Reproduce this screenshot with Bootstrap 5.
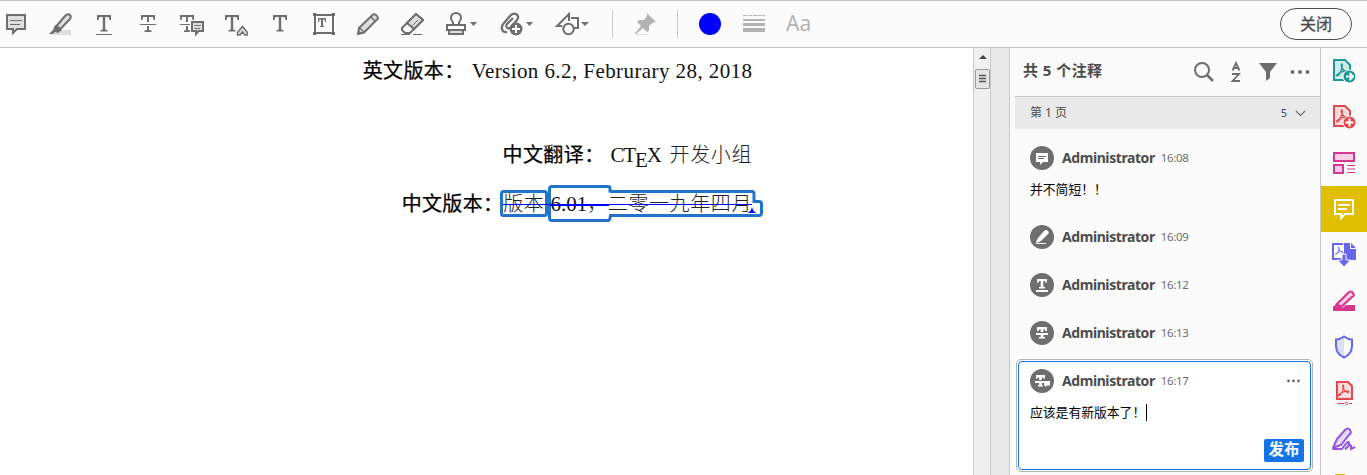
<!DOCTYPE html>
<html lang="zh-CN">
<head>
<meta charset="utf-8">
<title>注释</title>
<link href="https://cdn.jsdelivr.net/npm/bootstrap@5.3.0/dist/css/bootstrap.min.css" rel="stylesheet">
<style>
body{height:475px;font-family:"Noto Sans","Noto Sans CJK SC",sans-serif;color:#4b4b4b;background:#fbfbfb}
svg{display:block;flex:none}
main{height:427px}
.toolbar{height:48px;border-top:1px solid #c8c8c8;border-bottom:1px solid #c8c8c8;padding-left:4px;padding-right:15px}
.tools{gap:20px}
.g{fill:none;stroke:#6e6e6e;stroke-width:2}
.tint{fill:#dedede}
.solid{fill:#6e6e6e;stroke:none}
.rule{width:1px;height:28px;background:#c8c8c8}
.color-dot{width:22px;height:22px;background:#00f}
.aa{font:21px/22px "Noto Sans",sans-serif;color:#b3b3b3;position:relative;top:-1px}
.close-btn{width:72px;height:32px;border:1px solid #4b4b4b;font-size:16px;line-height:28px;color:#4b4b4b;padding:0;-webkit-text-stroke:.3px #4b4b4b}
.page{width:973px;background:#fff;padding:7px 221px 0 0;color:#000}
.line{height:30px;line-height:30px;font-size:20px;white-space:nowrap}
.hei{font-family:"Noto Sans CJK SC",sans-serif;font-weight:400;letter-spacing:.4px;-webkit-text-stroke:.25px #000}
.song{font-family:"Noto Sans CJK SC",sans-serif;font-weight:300;letter-spacing:.6px;color:#222}
.roman{font-family:"Liberation Serif",serif;font-size:21px;color:#111}
.version{letter-spacing:.42px;margin-right:-.42px}
.tex-e{position:relative;top:5px}
.marks{position:absolute;left:495px;top:132px}
.scroll{width:18px;background:#f0f0f0;border-left:1px solid #c8c8c8;border-right:1px solid #c8c8c8}
.gutter{width:19px;background:#e9e9e9;border-right:1px solid #c8c8c8}
.comments{width:310px}
.c-head{height:48px;padding:0 10px 0 13px}
.c-title{font-size:15px;font-weight:700;line-height:40px;padding-bottom:4px;letter-spacing:.45px}
.c-group{height:33px;margin-left:5px;border-top:1px solid #c8c8c8;background:#e9e9e9;font-size:12px;padding:0 14px 0 15px}
.entry{height:48px;padding-left:20px}
.who{font-size:14px;font-weight:700;line-height:24px;margin-left:8px;letter-spacing:-.42px}
.when{font-size:11.5px;line-height:24px;margin-left:6px;color:#6e6e6e;letter-spacing:-.35px}
.body-text{font-size:12.8px;line-height:18px;color:#000;font-family:"Noto Sans CJK SC",sans-serif}
.editor{margin:0 7px 0 6px;height:113px;border:1px solid #b3b3b3;border-radius:5px;padding:1px;background:#fff}
.editor-in{height:109px;border:1px solid #1473e6;border-radius:4px;padding:7px 6px 0 11px}
.caret{width:1px;height:17px;background:#000;margin-left:1px}
.post{width:40px;height:23px;border-radius:2px;background:#1473e6;color:#fff;font-size:15.5px;font-weight:700;line-height:21px}
.rail{width:47px;border-left:1px solid #c8c8c8}
.rail>div{height:46px;flex:none}
.rail .on{background:#e0be00}
</style>
</head>
<body class="d-flex flex-column overflow-hidden">
<svg width="0" height="0" class="position-absolute">
<defs>
<g id="tee"><path d="M0 0H14V5H12.4L11.6 2H8.2V14.5L10.5 15.2V16.5H3.5V15.2L5.8 14.5V2H2.4L1.6 5H0Z"/></g>
<g id="acro" fill="none" stroke-width="1.3"><path d="M6 0C4.5 0 5.5 4 8 6.500S13 8.500 12 7.300S6 7 2.500 9.500S.8 12 2 11.500S7.500 3 6 0Z"/></g>
</defs>
</svg>
<header class="toolbar d-flex align-items-center flex-shrink-0">
<div class="tools d-flex align-items-center">
<svg class="g" width="24" height="24"><path class="tint" d="M3 3H21V17H13L9 21V17H3Z"/><path d="M6 8.500H18M6 12.500H16" stroke-width="1"/></svg>
<svg width="24" height="24"><path d="M10 18H23V23H4Z" fill="#dedede"/><path d="M8.500 14L17 4Q20 1 22 3T21 8L12.500 17Z" fill="#dedede" stroke="#6e6e6e" stroke-width="2"/><path d="M7 13L14 18L10 21L7 20L5 22H1L5 18Z" fill="#6e6e6e"/></svg>
<svg class="solid" width="24" height="24"><use href="#tee" x="5" y="3"/><path d="M4 22H20V23H4Z"/></svg>
<svg class="solid" width="24" height="24"><path d="M5 3H19V8H17.500L17 5H13V10H11V5H7L6.500 8H5ZM11 14H13V18L15.500 18.500V20H8.500V18.500L11 18ZM4 12H20V13H4Z"/></svg>
<svg width="24" height="24"><path class="solid" d="M0 3H14V8H12.500L12 5H8V10H6V5H2L1.500 8H0ZM6 14H8V18L10 18.500V20H4V18.500L6 18ZM0 12H10V13H0Z"/><path class="g" style="fill:#dedede" d="M12 10H23V19H18.500L16 22V19H12Z"/><path d="M14.500 13.500H21M14.500 16.500H20" stroke="#6e6e6e"/></svg>
<svg class="solid" width="24" height="24"><use href="#tee" x="1" y="3"/><path d="M13.500 20.500L18.500 14.500L23.500 20.500V23H21L18.500 20L16 23H13.500Z" fill="#dedede" stroke="#6e6e6e" stroke-width="1.500"/></svg>
<svg class="solid" width="24" height="24"><use href="#tee" x="5" y="3"/></svg>
<svg class="g" width="24" height="24"><path d="M3 3H21V21H3Z"/><path class="solid" d="M1 1h3v3H1zM20 1h3v3h-3zM1 20h3v3H1zM20 20h3v3h-3zM6 6H14V10H12.800V7.500H11V14H12V15H8V14H9V7.500H7.200V10H6Z"/></svg>
<svg class="g" width="24" height="24"><path class="tint" d="M3 16L17 2.500Q19 1.500 21 4T21 7.500L8 20.500L2 22Z"/><path d="M3.500 16L8 20M15 5L19 9" stroke-width="1.500"/><path class="solid" d="M1 23L2.500 18.500L5.500 21.500Z"/></svg>
<svg class="g" width="24" height="24"><path fill="#fff" d="M2 16L16 2L23 8L10 21H5L2 18Z"/><path d="M16 2L23 8L14 17L7 11Z" class="tint"/><path d="M12 14L18 8" stroke-width="1"/><path d="M1 22.500H10M13 22.500H23" stroke-width="1" stroke-dasharray="9 2 2 1"/></svg>
</div>
<svg width="36" height="24" class="g" style="margin-left:19px"><path d="M4 13H22V18H4Z"/><path class="tint" d="M6 18H20V22H6Z"/><path d="M10 13V10.500Q8 8 8 5.500A5 4.500 0 0 1 18 5.500Q18 8 16 10.500V13"/><path class="solid" d="M27 10H34L30.500 14Z"/></svg>
<svg width="36" height="24" class="g" style="margin-left:20px"><path d="M8 20C3 21 1 15 5 11L11 4C15-1 22 3 18 8L12 15C9 18 6 15 8 12L14 6" stroke-width="2.200"/><circle cx="17" cy="17" r="6.500" class="solid"/><path d="M17 13V21M13 17H21" style="stroke:#fff"/><path class="solid" d="M27 10H34L30.500 14Z"/></svg>
<svg width="36" height="24" class="g" style="margin-left:19px"><path d="M8 14H3L15 2V9M17 6H24V16H20"/><circle cx="14.500" cy="17" r="5.200" fill="#fbfbfb"/><path class="solid" d="M27 10H35L31 14Z"/></svg>
<div class="rule" style="margin-left:22px"></div>
<svg width="24" height="24" style="margin-left:20px"><path d="M3 22H15V23H3Z" fill="#dedede"/><path fill="#b3b3b3" d="M14 1L23 10L20 10.500L16 14V19L14 20L10 16L3 22L2 21L8 14L4 10L6 8H11L14 4Z"/></svg>
<div class="rule" style="margin-left:20px"></div>
<div class="color-dot rounded-circle" style="margin-left:21px"></div>
<svg width="22" height="22" style="margin-left:22px"><path d="M0 2.500H22" stroke="#b3b3b3" stroke-dasharray="4 1"/><path fill="#b3b3b3" d="M0 6H22V8H0ZM0 10H22V13H0ZM0 15H22V19H0Z"/></svg>
<span class="aa" style="margin-left:21px">Aa</span>
<button class="btn close-btn rounded-pill ms-auto">关闭</button>
</header>
<main class="d-flex flex-shrink-0 overflow-hidden">
<section class="page position-relative text-end flex-shrink-0">
<div class="line"><span class="hei">英文版本：</span><span class="roman version" style="margin-left:7px">Version 6.2, Februrary 28, 2018</span></div>
<div class="line" style="margin-top:54px"><span class="hei">中文翻译：</span><span class="roman" style="margin-left:6px;letter-spacing:-1.200px">CT<span class="tex-e">E</span>X</span><span class="song" style="margin-left:9px">开发小组</span></div>
<div class="line" style="margin-top:19px"><span class="hei" style="letter-spacing:.3px">中文版本：</span><span class="song">版本</span><span class="roman" style="margin-left:6px">6.01</span><span class="song">，二零一九年四月</span></div>
<svg class="marks" width="275" height="46" fill="none"><g stroke="#2174c9" stroke-width="3"><rect x="6.500" y="11.500" width="45" height="24" rx="2"/><path d="M115 12.500V8Q115 6.500 113 6.500H57Q54.500 6.500 54.500 9V38Q54.500 40.500 57 40.500H113Q115 40.500 115.500 35.500H264Q266.500 35.500 266.500 33V24Q266.500 21.500 264 21.500H259V14Q259 11.500 257 11.500H115"/></g><path d="M8 24.500H257" stroke="#00f"/><path d="M55 25H114" stroke="#00f" stroke-width="2"/><path d="M252 33Q256 32 257 27Q258 32 262 33Z" fill="#00f"/></svg>
</section>
<div class="scroll flex-shrink-0"><svg width="16" height="50"><path d="M5 11L9 7L13 11Z" fill="#444"/><rect x="1.500" y="21.500" width="14" height="19" rx="1" fill="#e4e4e4" stroke="#999"/><path d="M5 27.500H12M5 30.500H12M5 33.500H12" stroke="#555" stroke-width="1.500"/></svg></div>
<div class="gutter flex-shrink-0"></div>
<section class="comments flex-shrink-0">
<div class="c-head d-flex align-items-center"><div class="c-title">共 5 个注释</div>
<svg class="g ms-auto" width="22" height="22"><circle cx="10" cy="9" r="7"/><path d="M15 14L21 20" stroke-width="2.500"/></svg>
<svg class="g" width="12" height="22" style="margin-left:16px"><path d="M2.500 9.500L6 2L9.500 9.500M3.500 7H8.500M2 13H9L2.500 20H10" stroke-width="1.800"/></svg>
<svg class="solid" width="20" height="20" style="margin-left:16px"><path d="M1 1H19L12 10V16L8 19V10Z"/></svg>
<svg class="solid" width="20" height="20" style="margin-left:12px"><circle cx="2.500" cy="10" r="2"/><circle cx="10" cy="10" r="2"/><circle cx="17.500" cy="10" r="2"/></svg></div>
<div class="c-group d-flex align-items-center"><span>第 1 页</span><span class="ms-auto" style="font-size:11px">5</span><svg width="11" height="8" style="margin-left:8px" fill="none" stroke="#6e6e6e" stroke-width="1.200"><path d="M1 2L5.500 6.500L10 2"/></svg></div>
<div style="padding-top:17px">
<div class="entry" style="height:79px"><div class="d-flex"><svg width="24" height="24"><circle class="solid" cx="12" cy="12" r="12"/><path fill="#fff" d="M6 7H18V16H13L10 19V16H6Z"/><path d="M8 10.500H16M8 12.500H14" stroke="#6e6e6e"/></svg><span class="who">Administrator</span><span class="when">16:08</span></div><div class="body-text" style="margin-top:10px">并不简短！！</div></div>
<div class="entry d-flex"><svg width="24" height="24"><circle class="solid" cx="12" cy="12" r="12"/><path fill="#fff" d="M8 13L14 6Q16 4 18 6T17 10L11 16L7 18L6 17ZM5 19L7 18H16V19Z"/></svg><span class="who">Administrator</span><span class="when">16:09</span></div>
<div class="entry d-flex"><svg width="24" height="24"><circle class="solid" cx="12" cy="12" r="12"/><path fill="#fff" d="M7 6H17V9.500H15.500L15 8H13.300V14H15V15.500H9V14H10.700V8H9L8.500 9.500H7ZM6 17H18V19H6Z"/></svg><span class="who">Administrator</span><span class="when">16:12</span></div>
<div class="entry d-flex" style="height:38px"><svg width="24" height="24"><circle class="solid" cx="12" cy="12" r="12"/><path fill="#fff" d="M7 6H17V10H15.500L15 8.500H13.300V11H10.700V8.500H9L8.500 10H7ZM6 12H18V14H13.300V16H15V17.500H9V16H10.700V14H6Z"/></svg><span class="who">Administrator</span><span class="when">16:13</span></div>
</div>
<div class="editor"><div class="editor-in"><div class="d-flex align-items-center"><svg width="24" height="24"><circle class="solid" cx="12" cy="12" r="12"/><path fill="#fff" d="M6 6H15V9.500H13.500L13 8.500H11.800V11H9.200V8.500H8L7.500 9.500H6ZM5 12H14V14H11.800V16H13V17.500H8V16H9.200V14H5ZM14 12H20V16.500H17L15.500 18.500V16.500H14Z"/></svg><span class="who">Administrator</span><span class="when">16:17</span><svg class="solid ms-auto" width="20" height="20"><circle cx="4.500" cy="10" r="1.400"/><circle cx="9.500" cy="10" r="1.400"/><circle cx="14.500" cy="10" r="1.400"/></svg></div>
<div class="d-flex align-items-center" style="margin-top:10px"><span class="body-text">应该是有新版本了！</span><span class="caret"></span></div>
<div class="post text-center ms-auto" style="margin-top:18px">发布</div></div></div>
</section>
<nav class="rail d-flex flex-column align-items-stretch flex-shrink-0 overflow-hidden">
<div class="d-flex justify-content-center align-items-center"><svg width="24" height="24" fill="none" stroke="#1c9a98" stroke-width="2"><path fill="#d0e9e9" d="M2 1H13L18 6V21H2Z"/><use href="#acro" x="4" y="5"/><circle cx="17.500" cy="17.500" r="6.500" fill="#1c9a98" stroke="#fbfbfb" stroke-width="1"/><path stroke="#fff" d="M14 17.500H20M17.500 14L21 17.500L17.500 21"/></svg></div>
<div class="d-flex justify-content-center align-items-center"><svg width="24" height="24" fill="none" stroke="#e34850" stroke-width="2"><path fill="#f8dcdc" d="M2 1H13L18 6V21H2Z"/><use href="#acro" x="4" y="5"/><circle cx="17.500" cy="17.500" r="6.500" fill="#e34850" stroke="#fbfbfb" stroke-width="1"/><path stroke="#fff" d="M13.500 17.500H21.500M17.500 13.500V21.500"/></svg></div>
<div class="d-flex justify-content-center align-items-center"><svg width="24" height="24" fill="#f5cfe8" stroke="#d83790" stroke-width="2"><path d="M2 2H22V10H2ZM2 14H11V22H2Z"/><path d="M15 14.500H23M15 18H23M15 21.500H23" stroke-width="1.200"/></svg></div>
<div class="on d-flex justify-content-center align-items-center"><svg width="24" height="24" fill="none" stroke="#fff" stroke-width="2"><path d="M3 3H21V17H13L9 21V17H3Z"/><path d="M6 8H18M6 12H15"/></svg></div>
<div class="d-flex justify-content-center align-items-center"><svg width="26" height="26" fill="none" stroke="#6767ec" stroke-width="2"><path d="M11 17H2V2H12"/><use href="#acro" transform="translate(4 5) scale(.65)"/><path fill="#6767ec" stroke="none" d="M13 1H19V7H25V18H13ZM20 1L25 6H20Z"/><path fill="#6767ec" stroke="#fbfbfb" stroke-width="1" d="M11 12H15V18H19.500L13 25L6.500 18H11Z"/></svg></div>
<div class="d-flex justify-content-center align-items-center"><svg width="24" height="24" fill="#f5cfe8" stroke="#d83790" stroke-width="2.200"><path d="M5 15L16 4Q19 1 21 4T20 8L9 18Z"/><path fill="#d83790" stroke="none" d="M1 18L5 14L10 19L9 20L14 16H23V22H1Z"/></svg></div>
<div class="d-flex justify-content-center align-items-center"><svg width="24" height="24" fill="none" stroke="#6767ec" stroke-width="2"><path fill="#dedef8" stroke="none" d="M12 2V22Q3 18 4 5Q9 5 12 2Z"/><path d="M12 1.500Q8 4.500 4 4.500V11Q4 19 12 22.500Q20 19 20 11V4.500Q16 4.500 12 1.500Z"/></svg></div>
<div class="d-flex justify-content-center align-items-center"><svg width="24" height="24" fill="none" stroke="#e34850" stroke-width="2"><path fill="#f8dcdc" d="M5 1H16L20 5V18H5Z"/><use href="#acro" transform="translate(6 4) scale(.9)"/><path d="M5 22.500H12M17 22.500H20" stroke-width="1"/><circle cx="14.500" cy="22.300" r="1.200" stroke-width="1"/></svg></div>
<div class="d-flex justify-content-center align-items-center"><svg width="24" height="24" fill="#e5d8f5" stroke="#9256d9" stroke-width="2"><path d="M1 21L5 12L13 3Q16 0 18 3T17 8L9 18Z"/><path fill="none" d="M1 22H10Q17 12 17 16T13 22Q19 16 19 19T19 22L23 20"/></svg></div>
<div class="d-flex justify-content-center overflow-hidden" style="height:13px"><svg width="24" height="13"><path fill="#e0be00" d="M3 12H13L15 14V24H3Z"/></svg></div>
</nav>
</main>
<script src="https://cdn.jsdelivr.net/npm/bootstrap@5.3.0/dist/js/bootstrap.bundle.min.js"></script>
</body>
</html>
